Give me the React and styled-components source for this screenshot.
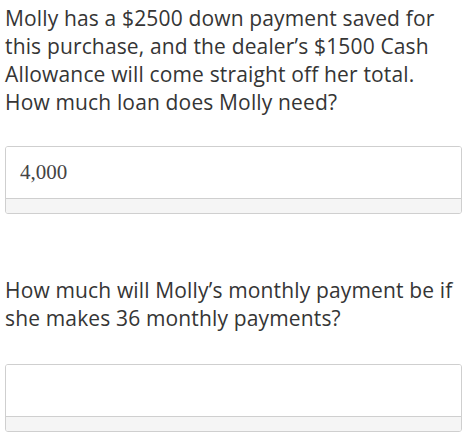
import React from "react";
import styled, { createGlobalStyle } from "styled-components";

const Global = createGlobalStyle`
  html, body { margin: 0; padding: 0; background: #fff; }
  body { font-family: "Open Sans", "Liberation Sans", sans-serif; }
`;

const Page = styled.div`
  padding: 0 12px 0 5px;
  display: flex;
  flex-direction: column;
`;

const Question = styled.p`
  margin: ${(p) => p.$top}px 0 0 0;
  font-size: 21px;
  line-height: 28px;
  letter-spacing: 0.15px;
  color: #353535;
  font-weight: 400;
  white-space: nowrap;
`;

const AnswerBox = styled.div`
  margin-top: ${(p) => p.$top}px;
  border: 1px solid #cfcfcf;
  border-radius: 3px;
  display: flex;
  flex-direction: column;
  overflow: hidden;
`;

const Field = styled.div`
  height: 51px;
  padding: 0 14px;
  display: flex;
  align-items: center;
  font-family: "Liberation Serif", "DejaVu Serif", serif;
  font-size: 21px;
  color: #444;
  background: #fff;
`;

const Strip = styled.div`
  height: 14px;
  border-top: 1px solid #cfcfcf;
  background: #f5f5f5;
`;

export default function App() {
  return (
    <>
      <Global />
      <Page>
        <Question $top={4}>
          Molly has a $2500 down payment saved for
          <br />
          this purchase, and the dealer’s $1500 Cash
          <br />
          Allowance will come straight off her total.
          <br />
          How much loan does Molly need?
        </Question>
        <AnswerBox $top={30}>
          <Field>4,000</Field>
          <Strip />
        </AnswerBox>
        <Question $top={62}>
          How much will Molly’s monthly payment be if
          <br />
          she makes 36 monthly payments?
        </Question>
        <AnswerBox $top={32}>
          <Field></Field>
          <Strip />
        </AnswerBox>
      </Page>
    </>
  );
}
